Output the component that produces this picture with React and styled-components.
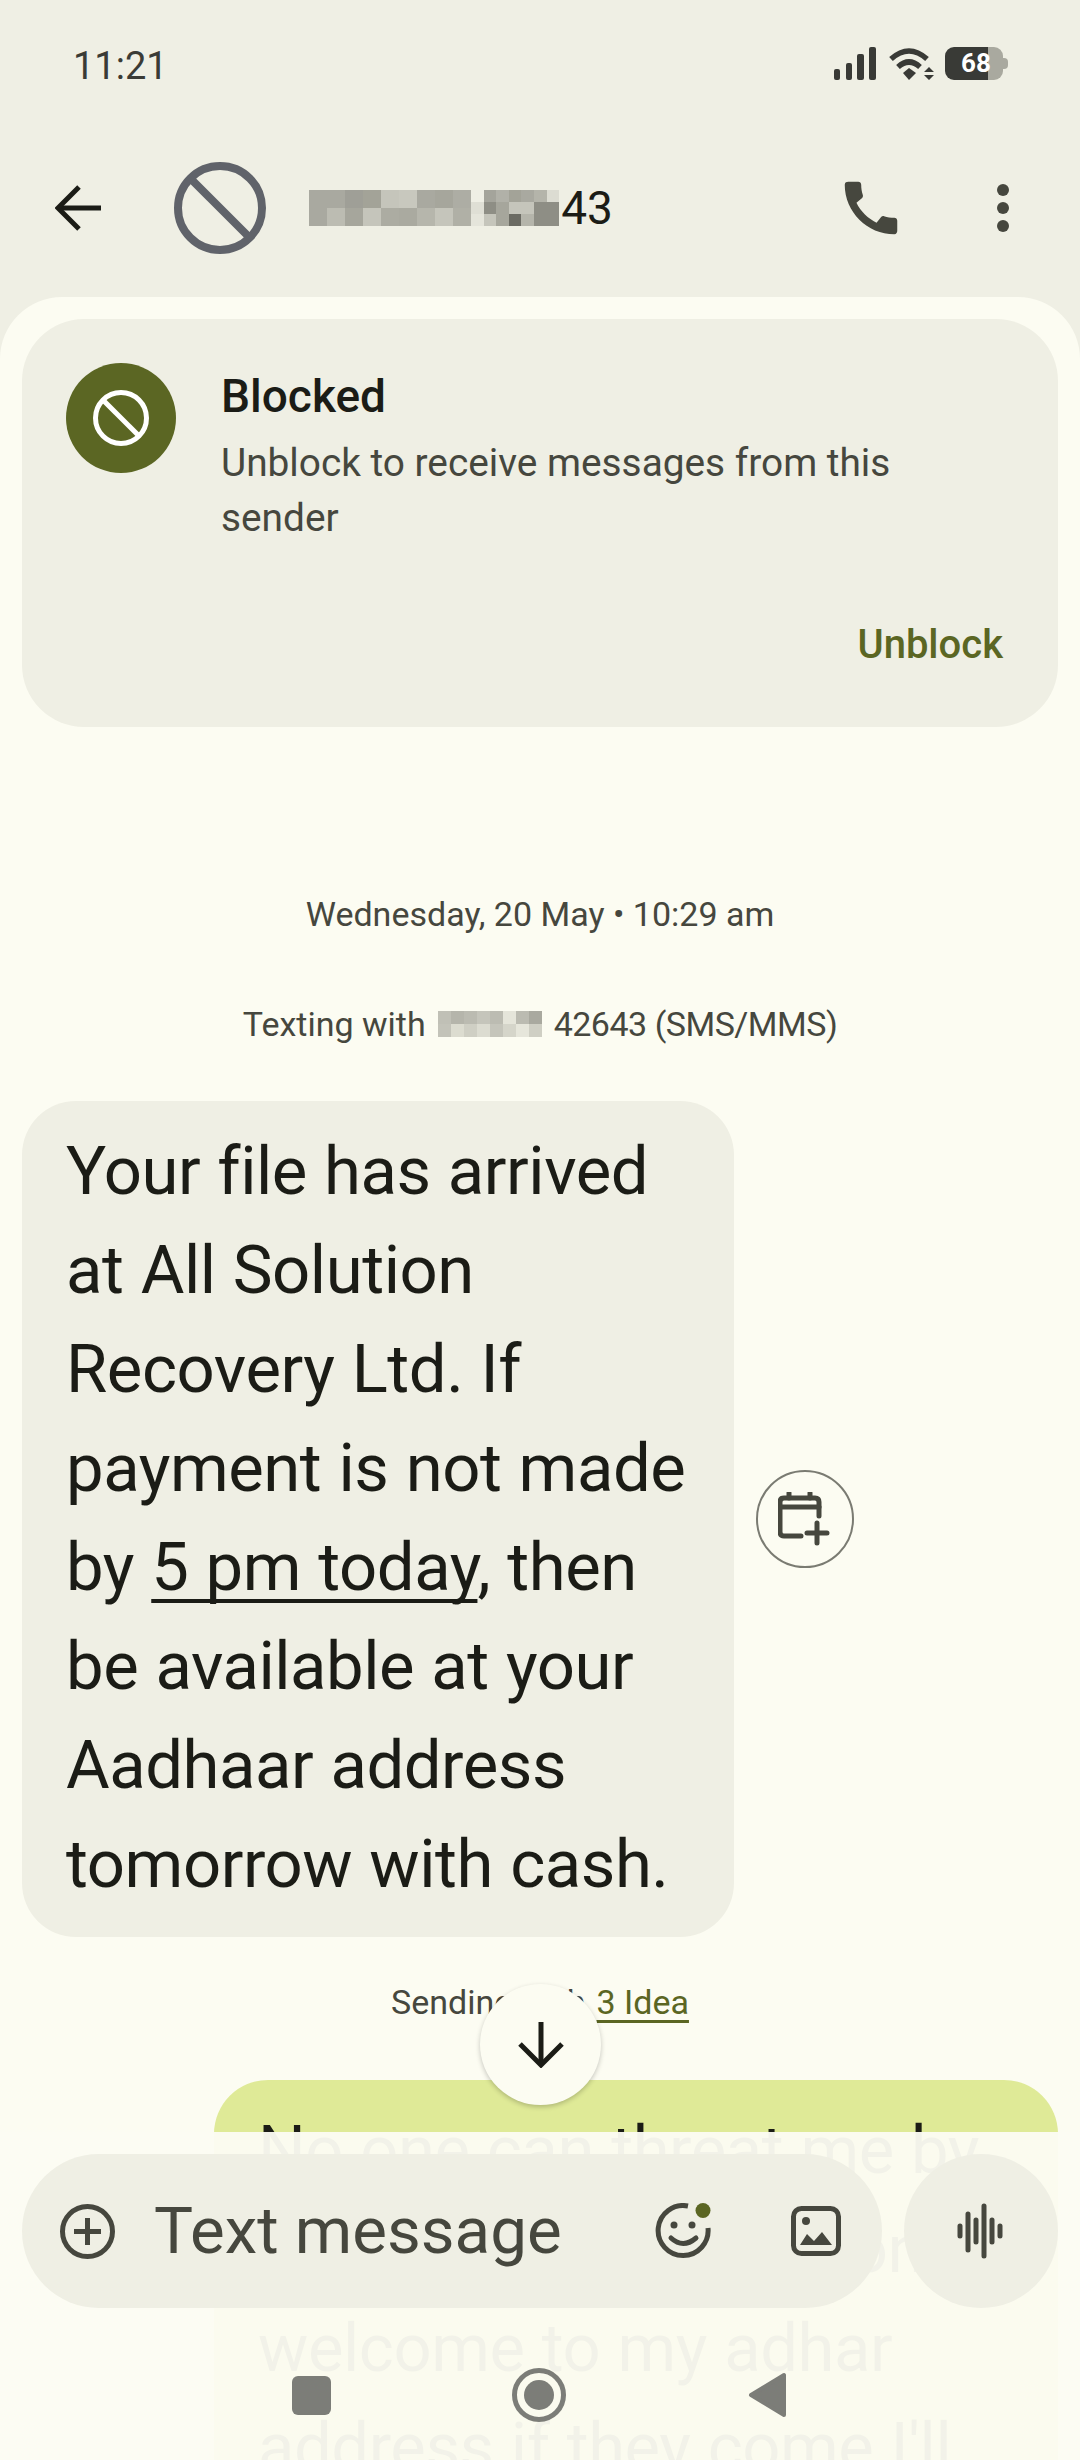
import React from 'react';
import styled, { createGlobalStyle } from 'styled-components';

const colors = {
  surface: '#EFEFE4',
  sheet: '#FCFCF2',
  olive: '#5B6623',
  ink: '#1B1C16',
  muted: '#46473E',
  sent: '#DFEA97',
  nav: '#7C7D78',
};

const GlobalStyle = createGlobalStyle`
  html, body {
    margin: 0;
    padding: 0;
    background: ${colors.surface};
    font-family: Roboto, "Liberation Sans", sans-serif;
  }
`;

const Page = styled.div`
  position: relative;
  width: 1080px;
  height: 2460px;
  overflow: hidden;
  background: ${colors.surface};
  color: ${colors.ink};
`;

const StatusBar = styled.div`
  display: flex;
  justify-content: space-between;
  align-items: flex-start;
  height: 119px;
  padding: 47px 72px 0 73px;
  box-sizing: border-box;
`;
const Clock = styled.div`
  font-size: 38px;
  line-height: 39px;
  color: #3a3b36;
`;
const StatusIcons = styled.div`
  display: flex;
  align-items: center;
  gap: 11px;
`;
const Battery = styled.div`
  position: relative;
  width: 58px;
  height: 33px;
  border-radius: 9px;
  margin-right: 5px;
  background: linear-gradient(to right, #393a36 74%, #a9a99f 74%);
  color: #fff;
  font-size: 26px;
  font-weight: 700;
  line-height: 33px;
  padding-left: 16px;
  box-sizing: border-box;
  &::after {
    content: '';
    position: absolute;
    right: -5px;
    top: 11px;
    width: 5px;
    height: 11px;
    border-radius: 0 4px 4px 0;
    background: #a9a99f;
  }
`;

const AppBar = styled.div`
  display: flex;
  align-items: center;
  height: 178px;
  padding: 0 0 0 55px;
  box-sizing: border-box;
`;
const BarTitle = styled.div`
  display: flex;
  align-items: center;
  margin-left: 73px;
  flex: 1;
  font-size: 46px;
  line-height: 54px;
`;
const Redacted = styled.div`
  display: flex;
  margin: 0 2px 0 43px;
`;
const PhoneSlot = styled.div`
  display: flex;
  margin-right: 91px;
`;
const MoreDots = styled.div`
  display: flex;
  flex-direction: column;
  gap: 6px;
  margin-right: 71px;
  span {
    width: 12px;
    height: 12px;
    border-radius: 50%;
    background: ${colors.muted};
  }
`;

const MosaicGrid = styled.div`
  display: grid;
  grid-template-columns: repeat(${(p) => p.$cols}, ${(p) => p.$w}px);
  grid-auto-rows: ${(p) => p.$h}px;
  flex-shrink: 0;
`;
const MosaicCell = styled.i`
  display: block;
  background: ${(p) => p.$color};
`;

const Sheet = styled.div`
  display: flex;
  flex-direction: column;
  background: ${colors.sheet};
  border-radius: 62px 62px 0 0;
  padding: 22px 22px 0;
  height: 2163px;
  box-sizing: border-box;
`;

const BlockedCard = styled.div`
  display: flex;
  flex-direction: column;
  flex-shrink: 0;
  height: 408px;
  border-radius: 62px;
  background: ${colors.surface};
  padding: 44px 55px 0 44px;
  box-sizing: border-box;
`;
const CardTop = styled.div`
  display: flex;
  gap: 45px;
`;
const CardAvatar = styled.div`
  display: flex;
  align-items: center;
  justify-content: center;
  width: 110px;
  height: 110px;
  flex-shrink: 0;
  border-radius: 50%;
  background: ${colors.olive};
`;
const CardTitle = styled.div`
  font-size: 46px;
  font-weight: 500;
  line-height: 50px;
  margin-top: 8px;
`;
const CardBody = styled.div`
  font-size: 38.8px;
  line-height: 55px;
  margin-top: 14px;
  width: 690px;
  color: ${colors.muted};
`;
const CardAction = styled.div`
  margin-top: 77px;
  align-self: flex-end;
  font-size: 40px;
  font-weight: 500;
  line-height: 46px;
  color: ${colors.olive};
`;

const MetaLine = styled.div`
  display: flex;
  justify-content: center;
  align-items: center;
  gap: ${(p) => p.$gap || 0}px;
  flex-shrink: 0;
  font-size: 34px;
  line-height: 40px;
  color: ${colors.muted};
  margin-top: ${(p) => p.$top}px;
`;
const SenderNumber = styled.span`
  letter-spacing: -0.5px;
`;

const MessageRow = styled.div`
  display: flex;
  align-items: center;
  flex-shrink: 0;
  gap: 22px;
  margin-top: 57px;
`;
const Bubble = styled.div`
  width: ${(p) => p.$width}px;
  box-sizing: border-box;
  flex-shrink: 0;
  padding: 21px 30px 23px 44px;
  border-radius: 54px;
  background: ${(p) => (p.$sent ? colors.sent : colors.surface)};
  font-size: 67px;
  letter-spacing: -0.45px;
  word-spacing: 1px;
  line-height: 99px;
`;
const SentRow = styled.div`
  display: flex;
  flex-shrink: 0;
  justify-content: flex-end;
  margin-top: 58px;
`;
const Underlined = styled.span`
  text-decoration: underline;
  text-decoration-thickness: 4px;
  text-decoration-skip-ink: none;
  text-underline-offset: 9px;
`;
const CalendarButton = styled.div`
  display: flex;
  align-items: center;
  justify-content: center;
  width: 98px;
  height: 98px;
  box-sizing: border-box;
  border-radius: 50%;
  border: 2px solid #7a7b72;
`;
const SimLink = styled.span`
  color: ${colors.olive};
  text-decoration: underline;
  text-decoration-thickness: 3px;
  text-decoration-skip-ink: none;
  text-underline-offset: 6px;
`;

const ScrollDown = styled.div`
  position: absolute;
  left: 480px;
  top: 1984px;
  display: flex;
  align-items: center;
  justify-content: center;
  width: 121px;
  height: 121px;
  border-radius: 50%;
  background: ${colors.sheet};
  box-shadow: 0 2px 5px rgba(0, 0, 0, 0.22);
`;

const Dock = styled.div`
  position: absolute;
  left: 0;
  right: 0;
  bottom: 0;
  height: 328px;
  padding-top: 22px;
  box-sizing: border-box;
  background: rgba(252, 252, 242, 0.955);
`;
const ComposeRow = styled.div`
  display: flex;
  gap: 22px;
  padding: 0 22px;
  height: 154px;
`;
const ComposeField = styled.div`
  display: flex;
  align-items: center;
  width: 860px;
  flex-shrink: 0;
  padding-left: 38px;
  box-sizing: border-box;
  border-radius: 77px;
  background: ${colors.surface};
  color: ${colors.muted};
`;
const Placeholder = styled.div`
  flex: 1;
  margin-left: 39px;
  font-size: 65.5px;
  line-height: 72px;
`;
const ComposeActions = styled.div`
  display: flex;
  align-items: center;
  gap: 80px;
  margin-right: 41px;
`;
const MicButton = styled.div`
  display: flex;
  align-items: center;
  justify-content: center;
  width: 154px;
  height: 154px;
  border-radius: 50%;
  background: ${colors.surface};
`;
const NavBar = styled.div`
  display: flex;
  align-items: center;
  justify-content: center;
  height: 130px;
  margin-top: 22px;
  padding-right: 2px;
`;
const NavSlot = styled.div`
  display: flex;
  justify-content: center;
  width: 228px;
`;
const NavSquare = styled.div`
  width: 39px;
  height: 39px;
  border-radius: 6px;
  background: ${colors.nav};
`;

const nameLeft = [
  '#a9a9a0', '#a9a9a0', '#9f9f97', '#a3a398', '#c5c5bb', '#c8c8be', '#a9a9a0', '#a6a69c', '#adada4',
  '#a9a9a0', '#bcbcb2', '#a6a69c', '#c5c5bb', '#acaca2', '#aaaaa0', '#b6b6ac', '#c5c5bb', '#b0b0a6',
];
const nameRight = [
  '#efefe5', '#a4a49b', '#b1b1a8', '#a3a398', '#a9a9a0', '#b4b4aa', '#dcdcd2',
  '#dfdfd5', '#8e8e85', '#a6a69c', '#c5c5bb', '#c5c5bb', '#8e8e85', '#8e8e85',
  '#e5e5db', '#c5c5bb', '#a6a69c', '#6b6b63', '#b5b5ab', '#8e8e85', '#8e8e85',
];
const senderCells = [
  '#c0c0b6', '#b5b5ab', '#bbbbb1', '#c5c5bb', '#bcbcb2', '#e5e5da', '#bbbbb1', '#a9a99f',
  '#c3c3b9', '#dcdcd0', '#cfcfc4', '#dcdcd1', '#c5c5bb', '#d5d5ca', '#e6e6db', '#cfcfc4',
];

const Mosaic = ({ cells, cols, w, h }) => (
  <MosaicGrid $cols={cols} $w={w} $h={h}>
    {cells.map((c, i) => (
      <MosaicCell key={i} $color={c} />
    ))}
  </MosaicGrid>
);

const BlockIcon = ({ size, stroke, color }) => (
  <svg width={size} height={size} viewBox={`0 0 ${size} ${size}`} fill="none" stroke={color} strokeWidth={stroke}>
    <circle cx={size / 2} cy={size / 2} r={(size - stroke) / 2} />
    <line x1={size * 0.16} y1={size * 0.16} x2={size * 0.84} y2={size * 0.84} />
  </svg>
);

const SignalIcon = () => (
  <svg width="43" height="33" viewBox="0 0 43 33" fill="#393a36">
    <rect x="0" y="22" width="6" height="11" rx="2" />
    <rect x="12" y="16" width="6" height="17" rx="2" />
    <rect x="23" y="7" width="7" height="26" rx="2" />
    <rect x="35" y="0" width="7" height="33" rx="2" />
  </svg>
);

const WifiIcon = () => (
  <svg width="46" height="33" viewBox="0 0 46 33">
    <path d="M3 12 Q21 -4 39 12" fill="none" stroke="#393a36" strokeWidth="5.5" />
    <path d="M10 20 Q21 10 32 20" fill="none" stroke="#393a36" strokeWidth="5.5" />
    <path d="M15 26 L21 21 L28 26 L21 33 Z" fill="#393a36" />
    <path d="M36 25 L41 20 L46 25 Z M36 28 H46 L41 33 Z" fill="#393a36" />
  </svg>
);

const BackIcon = () => (
  <svg width="46" height="46" viewBox="0 0 46 46" fill="none" stroke={colors.ink} strokeWidth="5">
    <path d="M46 23 H5" />
    <path d="M24 2 L3 23 L24 44" />
  </svg>
);

const PhoneIcon = () => (
  <svg width="70" height="70" viewBox="0 0 24 24" fill={colors.muted}>
    <path d="M20.01 15.38c-1.23 0-2.42-.2-3.53-.56-.35-.12-.74-.03-1.01.24l-1.57 1.97c-2.83-1.35-5.48-3.9-6.89-6.83l1.95-1.66c.27-.28.35-.67.24-1.02-.37-1.11-.56-2.3-.56-3.53 0-.54-.45-.99-.99-.99H4.19C3.65 3 3 3.24 3 3.99 3 13.28 10.73 21 20.01 21c.71 0 .99-.63.99-1.18v-3.45c0-.54-.45-.99-.99-.99z" />
  </svg>
);

const CalendarPlusIcon = () => (
  <svg width="54" height="54" viewBox="0 0 54 54" fill="none" stroke={colors.muted} strokeWidth="5" strokeLinecap="round" strokeLinejoin="round">
    <path d="M23 44 H6 Q2 44 2 40 V10 Q2 6 6 6 H37 Q41 6 41 10 V24" />
    <path d="M2 15 H41" />
    <path d="M11 1 V6 M32 1 V6" />
    <path d="M29 41 H49 M39 31 V51" />
  </svg>
);

const ArrowDownIcon = () => (
  <svg width="46" height="46" viewBox="0 0 46 46" fill="none" stroke={colors.ink} strokeWidth="5">
    <path d="M23 0 V41" />
    <path d="M2 22 L23 43 L44 22" />
  </svg>
);

const PlusCircleIcon = () => (
  <svg width="55" height="55" viewBox="0 0 55 55" fill="none" stroke={colors.muted} strokeWidth="5">
    <circle cx="27.5" cy="27.5" r="25" />
    <path d="M14 27.5 H41 M27.5 14 V41" />
  </svg>
);

const EmojiIcon = () => (
  <svg width="56" height="56" viewBox="0 0 56 56" fill="none" stroke={colors.muted} strokeWidth="5">
    <path d="M33 3 A25 25 0 1 0 53 25" />
    <circle cx="19" cy="22" r="3.5" fill={colors.muted} stroke="none" />
    <circle cx="37" cy="22" r="3.5" fill={colors.muted} stroke="none" />
    <path d="M16 35 Q28 46 41 35" strokeLinecap="round" />
    <circle cx="48" cy="7.5" r="7.5" fill={colors.olive} stroke="none" />
  </svg>
);

const PictureIcon = () => (
  <svg width="50" height="50" viewBox="0 0 50 50" fill="none" stroke={colors.muted} strokeWidth="5">
    <rect x="2.5" y="2.5" width="45" height="45" rx="8" />
    <circle cx="15" cy="15" r="4" fill={colors.muted} stroke="none" />
    <path d="M9 39 L16 28 L23 35 L31 26 L41 39 Z" fill={colors.muted} stroke="none" />
  </svg>
);

const WaveIcon = () => (
  <svg width="48" height="56" viewBox="0 0 48 56" fill="none" stroke={colors.muted} strokeWidth="5" strokeLinecap="round">
    <path d="M3 23 V33 M11 11 V47 M19 17 V39 M27 3 V53 M35 17 V39 M43 23 V33" />
  </svg>
);

const HomeIcon = () => (
  <svg width="54" height="54" viewBox="0 0 54 54">
    <circle cx="27" cy="27" r="24.5" fill="none" stroke={colors.nav} strokeWidth="5" />
    <circle cx="27" cy="27" r="15" fill={colors.nav} />
  </svg>
);

const BackTriangleIcon = () => (
  <svg width="38" height="46" viewBox="0 0 38 46" fill={colors.nav} stroke={colors.nav} strokeWidth="4" strokeLinejoin="round">
    <path d="M36 3 V43 L3 23 Z" />
  </svg>
);

const App = () => (
  <Page>
    <GlobalStyle />
    <StatusBar>
      <Clock>11:21</Clock>
      <StatusIcons>
        <SignalIcon />
        <WifiIcon />
        <Battery>68</Battery>
      </StatusIcons>
    </StatusBar>

    <AppBar>
      <BackIcon />
      <BarTitle>
        <BlockIcon size={92} stroke={8} color="#60636A" />
        <Redacted>
          <Mosaic cells={nameLeft} cols={9} w={18} h={18} />
          <Mosaic cells={nameRight} cols={7} w={12.6} h={12} />
        </Redacted>
        43
      </BarTitle>
      <PhoneSlot>
        <PhoneIcon />
      </PhoneSlot>
      <MoreDots>
        <span />
        <span />
        <span />
      </MoreDots>
    </AppBar>

    <Sheet>
      <BlockedCard>
        <CardTop>
          <CardAvatar>
            <BlockIcon size={56} stroke={5} color="#fff" />
          </CardAvatar>
          <div>
            <CardTitle>Blocked</CardTitle>
            <CardBody>Unblock to receive messages from this sender</CardBody>
          </div>
        </CardTop>
        <CardAction>Unblock</CardAction>
      </BlockedCard>

      <MetaLine $top={167}>Wednesday, 20 May • 10:29 am</MetaLine>
      <MetaLine $top={70} $gap={12}>
        Texting with
        <Mosaic cells={senderCells} cols={8} w={13} h={13} />
        <SenderNumber>42643 (SMS/MMS)</SenderNumber>
      </MetaLine>

      <MessageRow>
        <Bubble $width={712}>
          Your file has arrived at All Solution Recovery Ltd. If payment is not made by{' '}
          <Underlined>5 pm today</Underlined>, then be available at your Aadhaar address tomorrow with cash.
        </Bubble>
        <CalendarButton>
          <CalendarPlusIcon />
        </CalendarButton>
      </MessageRow>

      <MetaLine $top={45} $gap={11}>
        Sending with
        <SimLink>3 Idea</SimLink>
      </MetaLine>

      <SentRow>
        <Bubble $sent $width={844}>
          No one can threat me by
          <br />
          saying all this. Everyone
          <br />
          welcome to my adhar
          <br />
          address if they come I'll
        </Bubble>
      </SentRow>
    </Sheet>

    <ScrollDown>
      <ArrowDownIcon />
    </ScrollDown>

    <Dock>
      <ComposeRow>
        <ComposeField>
          <PlusCircleIcon />
          <Placeholder>Text message</Placeholder>
          <ComposeActions>
            <EmojiIcon />
            <PictureIcon />
          </ComposeActions>
        </ComposeField>
        <MicButton>
          <WaveIcon />
        </MicButton>
      </ComposeRow>
      <NavBar>
        <NavSlot>
          <NavSquare />
        </NavSlot>
        <NavSlot>
          <HomeIcon />
        </NavSlot>
        <NavSlot>
          <BackTriangleIcon />
        </NavSlot>
      </NavBar>
    </Dock>
  </Page>
);

export default App;
